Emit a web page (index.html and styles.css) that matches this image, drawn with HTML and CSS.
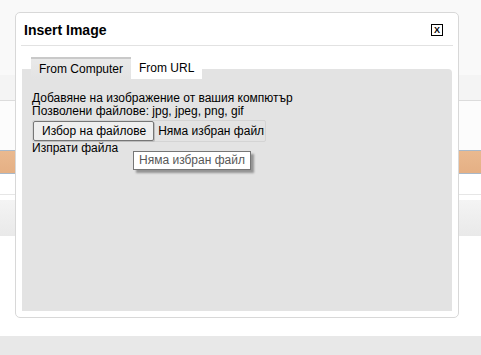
FILE: index.html
```html
<!DOCTYPE html>
<html lang="bg">
<head>
  <meta charset="UTF-8" />
  <meta name="viewport" content="width=device-width, initial-scale=1.0"/>
  <title>Insert Image</title>
  <link rel="stylesheet" href="styles.css">
</head>
<body>
  <!-- page behind the dialog -->
  <div class="page">
    <div class="top-bar"></div>
    <div class="sub-bar"></div>
    <div class="gap-a"></div>
    <div class="menu-bar"></div>
    <div class="gap-b"></div>
    <div class="tool-bar"></div>
    <div class="gap-c"></div>
    <div class="foot-bar"></div>
  </div>

  <div class="modal">
    <div class="modal-header">
      <h3>Insert Image</h3>
      <span class="close-btn">X</span>
    </div>

    <div class="tabs">
      <span class="tab active">From Computer</span>
      <span class="tab light">From URL</span>
    </div>
    <div class="tab-panel">
      <p class="info">Добавяне на изображение от вашия компютър<br>Позволени файлове: jpg, jpeg, png, gif</p>
      <div class="file-input">
        <span class="file-btn">Избор на файлове</span>
        <span class="file-name">Няма избран файл</span>
      </div>
      <p class="send">Изпрати файла</p>
    </div>
  </div>

  <div class="tooltip">Няма избран файл</div>
</body>
</html>
```

FILE: styles.css
```css
body {
  margin: 0;
  font-family: "Liberation Sans", Arial, sans-serif;
  font-size: 12px;
  color: #000;
  background: #fff;
}

.top-bar {
  height: 75px;
  background: #f9f9f9;
}

.sub-bar {
  height: 25px;
  background: #f4f4f4;
  border-bottom: 1px solid #dcdcdc;
}

.gap-a {
  height: 49px;
  background: #fcfcfc;
}

.menu-bar {
  height: 22px;
  border-top: 1px solid #a9b8c8;
  border-bottom: 1px solid #a9b8c8;
  background: linear-gradient(#eab98f, #e5b084);
}

.gap-b {
  height: 20px;
  border-bottom: 1px solid #e6e6e6;
  margin-bottom: 5px;
}

.tool-bar {
  height: 36px;
  background: linear-gradient(#f4f4f4, #e9e9e9);
}

.gap-c {
  height: 100px;
}

.foot-bar {
  height: 19px;
  background: #e8e8e8;
}

/* dialog */
.modal {
  position: absolute;
  left: 15px;
  top: 12px;
  width: 432px;
  height: 298px;
  padding: 1px 5px 5px;
  background: #fff;
  border: 1px solid #d8d8d8;
  border-radius: 5px;
}

.modal-header {
  display: flex;
  align-items: center;
  justify-content: space-between;
  height: 31px;
  padding: 0 10px 0 3px;
  border-bottom: 1px solid #e2e2e2;
}

.modal-header h3 {
  margin: 0;
  font-size: 14px;
  font-weight: bold;
}

.close-btn {
  width: 10px;
  height: 10px;
  border: 1px solid #000;
  font-size: 9px;
  font-weight: bold;
  line-height: 10px;
  text-align: center;
}

.tabs {
  display: flex;
  margin: 11px 0 0 10px;
  height: 22px;
}

.tab {
  padding: 0 8px;
  line-height: 22px;
  font-size: 12px;
}

.tab.active {
  background: linear-gradient(#e9e9e9, #e3e3e3);
  border-top: 2px solid #c9c9c9;
  line-height: 20px;
}

.tab.light {
  position: relative;
  z-index: 1;
  background: #fff;
}

.tab-panel {
  margin: -10px 1px 0;
  height: 242px;
  padding: 23px 0 0 10px;
  box-sizing: border-box;
  background: #e3e3e3;
  border-radius: 0 4px 0 0;
}

.info {
  margin: 0;
  line-height: 13px;
}

.file-input {
  display: inline-flex;
  align-items: center;
  margin-top: 2px;
  border: 1px solid #d4d4d4;
  border-radius: 2px;
}

.file-btn {
  padding: 0 7px 0 8px;
  height: 18px;
  line-height: 18px;
  background: #efefef;
  border: 1px solid #767676;
  border-radius: 2px;
  box-shadow: 1px 1px 0 #bdbdbd;
}

.file-name {
  padding: 0 1px 0 4px;
}

.send {
  margin: 0;
  line-height: 13px;
}

.tooltip {
  position: absolute;
  left: 133px;
  top: 151px;
  padding: 0 5px;
  height: 17px;
  line-height: 17px;
  background: #fff;
  border: 1px solid #767676;
  color: #575757;
  font-size: 12px;
  box-shadow: 3px 3px 2px rgba(0, 0, 0, 0.35);
}
```
